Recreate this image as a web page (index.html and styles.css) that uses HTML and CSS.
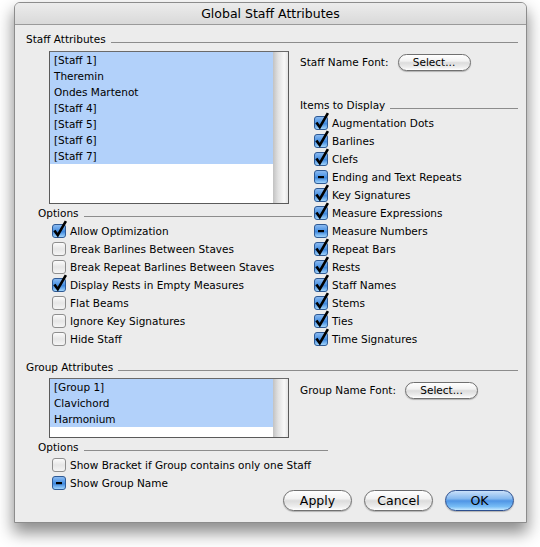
FILE: index.html
```html
<!DOCTYPE html>
<html lang="en">
<head>
<meta charset="utf-8">
<title>Global Staff Attributes</title>
<link rel="stylesheet" href="styles.css">
</head>
<body>
<svg class="defs" width="0" height="0" aria-hidden="true">
  <defs>
    <linearGradient id="gOn" x1="0" y1="0" x2="0" y2="1">
      <stop offset="0" stop-color="#8fbdf2"/>
      <stop offset="0.45" stop-color="#4f95e4"/>
      <stop offset="0.55" stop-color="#3f88de"/>
      <stop offset="1" stop-color="#aadcff"/>
    </linearGradient>
    <linearGradient id="gOff" x1="0" y1="0" x2="0" y2="1">
      <stop offset="0" stop-color="#fdfdfd"/>
      <stop offset="0.5" stop-color="#e6e6e6"/>
      <stop offset="1" stop-color="#f6f6f6"/>
    </linearGradient>
  </defs>
</svg>
<div class="window">
  <div class="titlebar">Global Staff Attributes</div>
  <div class="content">
    <div class="head head-top">Staff Attributes</div>
    <div class="block staff-block">
      <div class="col-left">
        <div class="list list-staff">
          <div class="items">
            <div class="item">[Staff 1]</div>
            <div class="item">Theremin</div>
            <div class="item">Ondes Martenot</div>
            <div class="item">[Staff 4]</div>
            <div class="item">[Staff 5]</div>
            <div class="item">[Staff 6]</div>
            <div class="item">[Staff 7]</div>
          </div>
          <div class="scroll"></div>
        </div>
        <div class="head head-options">Options</div>
        <div class="cb-list cb-left">
          <div class="cb-row"><svg class="cb" viewBox="0 0 16 16" width="16" height="16"><rect x="0.5" y="1.5" width="13" height="13" rx="2.5" fill="url(#gOn)" stroke="#2f5a94"/><path d="M2.4 7.4 L5.8 12.2 L13.9 -1.8" fill="none" stroke="#000" stroke-width="2.6"/></svg><span>Allow Optimization</span></div>
          <div class="cb-row"><svg class="cb" viewBox="0 0 16 16" width="16" height="16"><rect x="0.5" y="1.5" width="13" height="13" rx="2.5" fill="url(#gOff)" stroke="#8e8e8e"/></svg><span>Break Barlines Between Staves</span></div>
          <div class="cb-row"><svg class="cb" viewBox="0 0 16 16" width="16" height="16"><rect x="0.5" y="1.5" width="13" height="13" rx="2.5" fill="url(#gOff)" stroke="#8e8e8e"/></svg><span>Break Repeat Barlines Between Staves</span></div>
          <div class="cb-row"><svg class="cb" viewBox="0 0 16 16" width="16" height="16"><rect x="0.5" y="1.5" width="13" height="13" rx="2.5" fill="url(#gOn)" stroke="#2f5a94"/><path d="M2.4 7.4 L5.8 12.2 L13.9 -1.8" fill="none" stroke="#000" stroke-width="2.6"/></svg><span>Display Rests in Empty Measures</span></div>
          <div class="cb-row"><svg class="cb" viewBox="0 0 16 16" width="16" height="16"><rect x="0.5" y="1.5" width="13" height="13" rx="2.5" fill="url(#gOff)" stroke="#8e8e8e"/></svg><span>Flat Beams</span></div>
          <div class="cb-row"><svg class="cb" viewBox="0 0 16 16" width="16" height="16"><rect x="0.5" y="1.5" width="13" height="13" rx="2.5" fill="url(#gOff)" stroke="#8e8e8e"/></svg><span>Ignore Key Signatures</span></div>
          <div class="cb-row"><svg class="cb" viewBox="0 0 16 16" width="16" height="16"><rect x="0.5" y="1.5" width="13" height="13" rx="2.5" fill="url(#gOff)" stroke="#8e8e8e"/></svg><span>Hide Staff</span></div>
        </div>
      </div>
      <div class="col-right">
        <div class="fontrow"><span class="fontlabel">Staff Name Font:</span><button class="btn btn-small" type="button">Select...</button></div>
        <div class="head head-items">Items to Display</div>
        <div class="cb-list cb-right">
          <div class="cb-row"><svg class="cb" viewBox="0 0 16 16" width="16" height="16"><rect x="0.5" y="1.5" width="13" height="13" rx="2.5" fill="url(#gOn)" stroke="#2f5a94"/><path d="M2.4 7.4 L5.8 12.2 L13.9 -1.8" fill="none" stroke="#000" stroke-width="2.6"/></svg><span>Augmentation Dots</span></div>
          <div class="cb-row"><svg class="cb" viewBox="0 0 16 16" width="16" height="16"><rect x="0.5" y="1.5" width="13" height="13" rx="2.5" fill="url(#gOn)" stroke="#2f5a94"/><path d="M2.4 7.4 L5.8 12.2 L13.9 -1.8" fill="none" stroke="#000" stroke-width="2.6"/></svg><span>Barlines</span></div>
          <div class="cb-row"><svg class="cb" viewBox="0 0 16 16" width="16" height="16"><rect x="0.5" y="1.5" width="13" height="13" rx="2.5" fill="url(#gOn)" stroke="#2f5a94"/><path d="M2.4 7.4 L5.8 12.2 L13.9 -1.8" fill="none" stroke="#000" stroke-width="2.6"/></svg><span>Clefs</span></div>
          <div class="cb-row"><svg class="cb" viewBox="0 0 16 16" width="16" height="16"><rect x="0.5" y="1.5" width="13" height="13" rx="2.5" fill="url(#gOn)" stroke="#2f5a94"/><rect x="4" y="7" width="6" height="2.2" fill="#000"/></svg><span>Ending and Text Repeats</span></div>
          <div class="cb-row"><svg class="cb" viewBox="0 0 16 16" width="16" height="16"><rect x="0.5" y="1.5" width="13" height="13" rx="2.5" fill="url(#gOn)" stroke="#2f5a94"/><path d="M2.4 7.4 L5.8 12.2 L13.9 -1.8" fill="none" stroke="#000" stroke-width="2.6"/></svg><span>Key Signatures</span></div>
          <div class="cb-row"><svg class="cb" viewBox="0 0 16 16" width="16" height="16"><rect x="0.5" y="1.5" width="13" height="13" rx="2.5" fill="url(#gOn)" stroke="#2f5a94"/><path d="M2.4 7.4 L5.8 12.2 L13.9 -1.8" fill="none" stroke="#000" stroke-width="2.6"/></svg><span>Measure Expressions</span></div>
          <div class="cb-row"><svg class="cb" viewBox="0 0 16 16" width="16" height="16"><rect x="0.5" y="1.5" width="13" height="13" rx="2.5" fill="url(#gOn)" stroke="#2f5a94"/><rect x="4" y="7" width="6" height="2.2" fill="#000"/></svg><span>Measure Numbers</span></div>
          <div class="cb-row"><svg class="cb" viewBox="0 0 16 16" width="16" height="16"><rect x="0.5" y="1.5" width="13" height="13" rx="2.5" fill="url(#gOn)" stroke="#2f5a94"/><path d="M2.4 7.4 L5.8 12.2 L13.9 -1.8" fill="none" stroke="#000" stroke-width="2.6"/></svg><span>Repeat Bars</span></div>
          <div class="cb-row"><svg class="cb" viewBox="0 0 16 16" width="16" height="16"><rect x="0.5" y="1.5" width="13" height="13" rx="2.5" fill="url(#gOn)" stroke="#2f5a94"/><path d="M2.4 7.4 L5.8 12.2 L13.9 -1.8" fill="none" stroke="#000" stroke-width="2.6"/></svg><span>Rests</span></div>
          <div class="cb-row"><svg class="cb" viewBox="0 0 16 16" width="16" height="16"><rect x="0.5" y="1.5" width="13" height="13" rx="2.5" fill="url(#gOn)" stroke="#2f5a94"/><path d="M2.4 7.4 L5.8 12.2 L13.9 -1.8" fill="none" stroke="#000" stroke-width="2.6"/></svg><span>Staff Names</span></div>
          <div class="cb-row"><svg class="cb" viewBox="0 0 16 16" width="16" height="16"><rect x="0.5" y="1.5" width="13" height="13" rx="2.5" fill="url(#gOn)" stroke="#2f5a94"/><path d="M2.4 7.4 L5.8 12.2 L13.9 -1.8" fill="none" stroke="#000" stroke-width="2.6"/></svg><span>Stems</span></div>
          <div class="cb-row"><svg class="cb" viewBox="0 0 16 16" width="16" height="16"><rect x="0.5" y="1.5" width="13" height="13" rx="2.5" fill="url(#gOn)" stroke="#2f5a94"/><path d="M2.4 7.4 L5.8 12.2 L13.9 -1.8" fill="none" stroke="#000" stroke-width="2.6"/></svg><span>Ties</span></div>
          <div class="cb-row"><svg class="cb" viewBox="0 0 16 16" width="16" height="16"><rect x="0.5" y="1.5" width="13" height="13" rx="2.5" fill="url(#gOn)" stroke="#2f5a94"/><path d="M2.4 7.4 L5.8 12.2 L13.9 -1.8" fill="none" stroke="#000" stroke-width="2.6"/></svg><span>Time Signatures</span></div>
        </div>
      </div>
    </div>
    <div class="head head-group">Group Attributes</div>
    <div class="block group-block">
      <div class="col-left">
        <div class="list list-group">
          <div class="items">
            <div class="item">[Group 1]</div>
            <div class="item">Clavichord</div>
            <div class="item">Harmonium</div>
          </div>
          <div class="scroll"></div>
        </div>
        <div class="head head-options2">Options</div>
        <div class="cb-list cb-left">
          <div class="cb-row"><svg class="cb" viewBox="0 0 16 16" width="16" height="16"><rect x="0.5" y="1.5" width="13" height="13" rx="2.5" fill="url(#gOff)" stroke="#8e8e8e"/></svg><span>Show Bracket if Group contains only one Staff</span></div>
          <div class="cb-row"><svg class="cb" viewBox="0 0 16 16" width="16" height="16"><rect x="0.5" y="1.5" width="13" height="13" rx="2.5" fill="url(#gOn)" stroke="#2f5a94"/><rect x="4" y="7" width="6" height="2.2" fill="#000"/></svg><span>Show Group Name</span></div>
        </div>
      </div>
      <div class="col-right">
        <div class="fontrow fontrow-group"><span class="fontlabel">Group Name Font:</span><button class="btn btn-small" type="button">Select...</button></div>
        <div class="actions">
          <button class="btn btn-large" type="button">Apply</button>
          <button class="btn btn-large" type="button">Cancel</button>
          <button class="btn btn-large btn-ok" type="button">OK</button>
        </div>
      </div>
    </div>
  </div>
</div>
</body>
</html>
```
FILE: styles.css
```css
html, body {
  margin: 0;
  padding: 0;
}
body {
  width: 540px;
  height: 547px;
  overflow: hidden;
  background: #ffffff;
  font-family: "DejaVu Sans", "Liberation Sans", sans-serif;
  font-size: 10.5px;
  color: #000;
}
.defs {
  position: absolute;
  width: 0;
  height: 0;
}
.window {
  box-sizing: border-box;
  width: 513px;
  height: 521px;
  margin: 2px 0 0 14px;
  border: 1px solid #8c8c8c;
  border-radius: 6px 6px 0 0;
  background: #ececec;
  box-shadow: 0 9px 16px 1px rgba(0, 0, 0, 0.45);
}
.titlebar {
  height: 21px;
  line-height: 21px;
  text-align: center;
  font-size: 12.5px;
  border-bottom: 1px solid #9a9a9a;
  border-radius: 5px 5px 0 0;
  background: linear-gradient(#ececec, #d9d9d9);
}
.content {
  padding: 7px 8px 0 11px;
}
.head {
  display: flex;
  align-items: center;
  height: 14px;
  line-height: 14px;
  white-space: nowrap;
}
.head::after {
  content: "";
  flex: 1;
  height: 1px;
  background: #8c8c8c;
  margin: 6px 0 0 5px;
}
.block {
  display: flex;
}
.staff-block {
  margin-top: 5px;
}
.head-group {
  margin-top: 12px;
}
.group-block {
  margin-top: 4px;
}
.col-left {
  width: 274px;
  flex: none;
}
.col-right {
  flex: 1;
  min-width: 0;
  display: flex;
  flex-direction: column;
}
.list {
  box-sizing: border-box;
  width: 240px;
  margin-left: 23px;
  border: 1px solid #5a5a5a;
  border-top-color: #6a6a6a;
  background: #fff;
  display: flex;
}
.list-staff {
  height: 153px;
}
.list-group {
  height: 60px;
}
.items {
  flex: 1;
}
.item {
  height: 16px;
  line-height: 16px;
  padding-left: 4px;
  background: #b2d1fa;
  white-space: nowrap;
}
.scroll {
  width: 15px;
  background: linear-gradient(to right, #c2c2c2, #e2e2e2 35%, #f8f8f8 75%, #e4e4e4);
}
.head-options {
  margin: 2px -12px 0 12px;
}
.head-options2 {
  margin: 2px -28px 0 12px;
}
.cb-list {
  margin-top: 2px;
}
.cb-left {
  padding-left: 26px;
}
.cb-right {
  padding-left: 14px;
}
.cb-row {
  display: flex;
  align-items: center;
  height: 18px;
  white-space: nowrap;
}
.cb {
  flex: none;
  overflow: visible;
  margin-right: 2px;
}
.fontrow {
  display: flex;
  align-items: center;
  height: 18px;
  margin-top: 2px;
}
.fontrow-group {
  margin-top: 3px;
}
.fontlabel {
  margin-right: 9px;
}
.head-items {
  margin-top: 27px;
}
.btn {
  box-sizing: border-box;
  margin: 0;
  padding: 0;
  font-family: "DejaVu Sans", "Liberation Sans", sans-serif;
  color: #000;
  border: 1px solid #707070;
  background: linear-gradient(#ffffff, #f2f2f2 40%, #dcdcdc 52%, #ececec 80%, #ffffff);
  box-shadow: 0 1px 1px rgba(0, 0, 0, 0.25);
}
.btn-small {
  width: 73px;
  height: 17px;
  border-radius: 9px;
  font-size: 10.5px;
  line-height: 15px;
}
.btn-large {
  width: 69px;
  height: 21px;
  border-radius: 11px;
  font-size: 12.5px;
  line-height: 19px;
}
.btn-ok {
  border-color: #2d4f8e;
  background: linear-gradient(#c9e0fa, #86b9ef 40%, #4f95e5 52%, #78bdf6 82%, #c4e8ff);
}
.actions {
  display: flex;
  align-self: flex-end;
  gap: 12px;
  margin: 91px 4px 0 0;
}
```
